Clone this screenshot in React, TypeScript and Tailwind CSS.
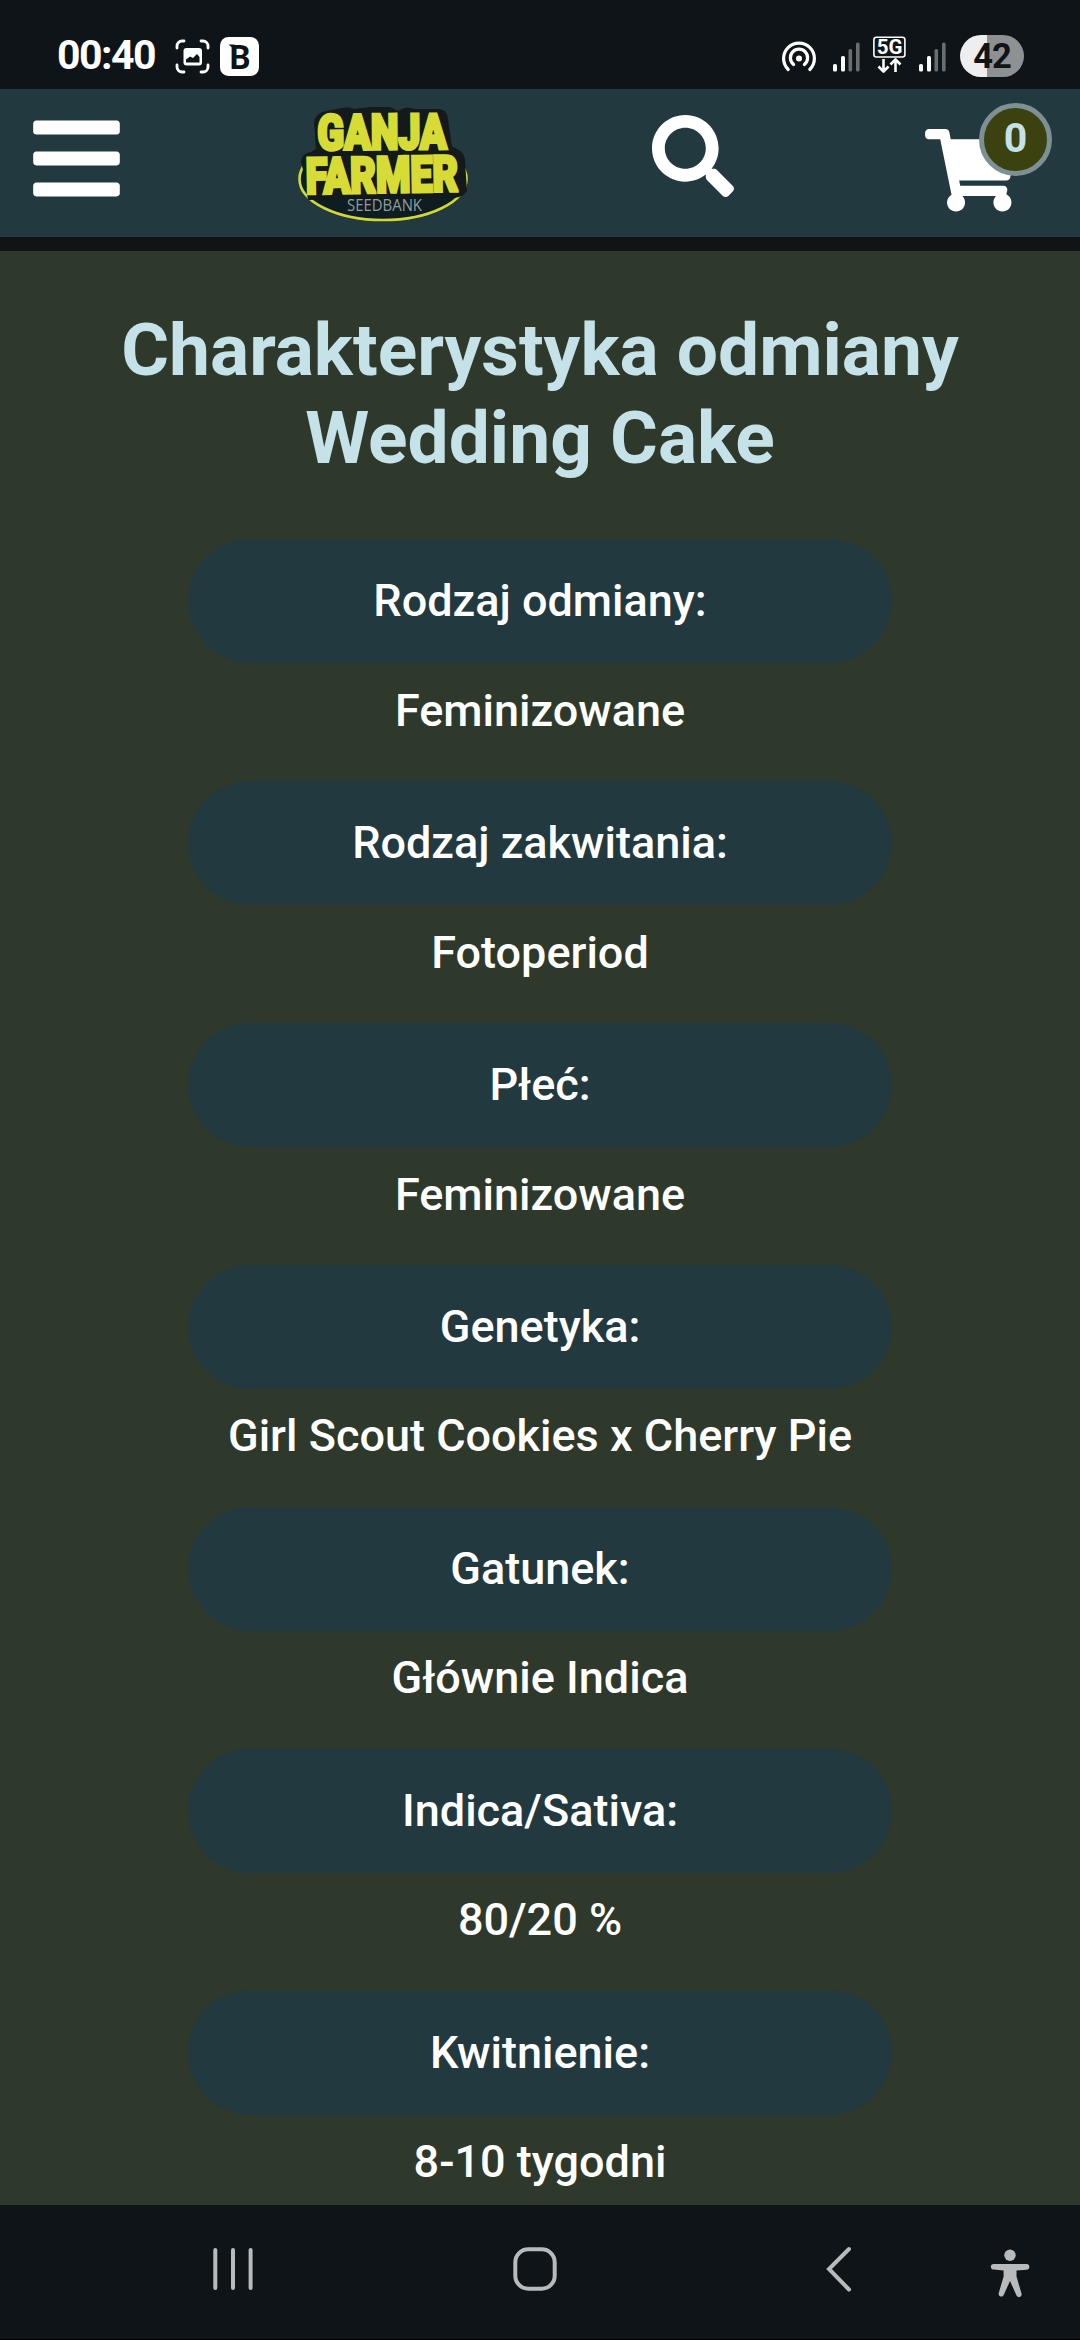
import { FaBars, FaSearch, FaShoppingCart } from 'react-icons/fa'

const traits = [
  { label: 'Rodzaj odmiany:', value: 'Feminizowane' },
  { label: 'Rodzaj zakwitania:', value: 'Fotoperiod' },
  { label: 'Płeć:', value: 'Feminizowane' },
  { label: 'Genetyka:', value: 'Girl Scout Cookies x Cherry Pie' },
  { label: 'Gatunek:', value: 'Głównie Indica' },
  { label: 'Indica/Sativa:', value: '80/20 %' },
  { label: 'Kwitnienie:', value: '8-10 tygodni' },
]

function SignalBars({ className = '' }: { className?: string }) {
  return (
    <svg viewBox="0 0 28 30" className={`h-[30px] w-[28px] shrink-0 ${className}`}>
      <rect x="0" y="22" width="4" height="7.5" rx="1.6" fill="#fff" />
      <rect x="8" y="14" width="4" height="15.5" rx="1.6" fill="#fff" />
      <rect x="15.5" y="7" width="3.6" height="22.5" rx="1.6" fill="#6b6e70" />
      <rect x="23" y="0.5" width="3.6" height="29" rx="1.6" fill="#6b6e70" />
    </svg>
  )
}

function StatusBar() {
  return (
    <div className="flex h-[89px] shrink-0 items-start bg-[#0e1417] text-white">
      <span className="mt-[31px] ml-[57px] w-[99px] text-[41px] leading-[48px] font-bold tracking-[-1.5px] whitespace-nowrap">
        00:40
      </span>

      {/* Screenshot */}
      <svg viewBox="0 0 36 36" className="mt-[38.5px] ml-[18.5px] h-9 w-9 shrink-0" fill="none">
        <path
          d="M2 9V7a5 5 0 0 1 5-5h2M26 2h2a5 5 0 0 1 5 5v2M33 26v2a5 5 0 0 1-5 5h-2M9 33H7a5 5 0 0 1-5-5v-2"
          stroke="#fff"
          strokeWidth="2.8"
          strokeLinecap="round"
        />
        <rect x="8.5" y="9" width="18.5" height="17.5" rx="3" fill="#fff" />
        <path d="M11 23.5v-3l4-3 3 1.5 4-4 2.5 3v5.5z" fill="#0e1417" />
      </svg>

      {/* Booking app */}
      <svg viewBox="0 0 39 39" className="mt-[37px] ml-[9.5px] h-[39px] w-[39px] shrink-0">
        <rect width="39" height="39" rx="8.5" fill="#fff" />
        <path d="M8.5 7.5h6v5z" fill="#0e1417" />
        <text x="9.5" y="31.5" fontSize="33" fontWeight="700" fill="#0e1417" className="font-[Roboto]">
          B
        </text>
      </svg>

      <div className="ml-auto flex items-start">
        {/* Hotspot */}
        <svg viewBox="0 0 36 32" className="mt-10 h-8 w-9 shrink-0" fill="none">
          <path d="M7.2 29.5A15.4 15.4 0 1 1 28.8 29.5" stroke="#fff" strokeWidth="3.2" strokeLinecap="round" />
          <path d="M12.6 24.5A8.6 8.6 0 1 1 23.4 24.5" stroke="#fff" strokeWidth="3.2" strokeLinecap="round" />
          <circle cx="18" cy="18.5" r="3" fill="#fff" />
        </svg>
        <SignalBars className="mt-10.5 ml-[16px]" />

        {/* 5G with traffic arrows */}
        <svg viewBox="0 0 33 38" className="mt-[35.5px] ml-[12px] h-[38px] w-[33px] shrink-0" fill="none">
          <rect x="0.9" y="1.2" width="31" height="19.8" rx="2.5" stroke="#fff" strokeWidth="1.6" />
          <text x="16.5" y="18.2" textAnchor="middle" fontSize="20.5" fontWeight="700" fill="#fff" className="font-[Roboto]">
            5G
          </text>
          <path d="M10.5 23v12M5.5 30.5l5 5 5-5M22.5 36V24M17.5 28.5l5-5 5 5" stroke="#fff" strokeWidth="2.6" strokeLinejoin="round" />
        </svg>
        <SignalBars className="mt-10.5 ml-[13px]" />

        <div className="mt-[35px] mr-14 ml-[13px] flex h-[42px] w-16 items-center justify-center rounded-full bg-linear-to-r from-[#eeeeee] from-[42%] to-[#8f9092] to-[42%] text-[34.5px] leading-none font-bold tracking-[-1px] text-[#0e1417]">
          42
        </div>
      </div>
    </div>
  )
}

function Logo() {
  return (
    <svg viewBox="0 0 200 150" className="h-[150px] w-[200px] shrink-0 overflow-visible">
      <ellipse cx="103" cy="90" rx="83.5" ry="41" fill="#0e1d22" stroke="#d2d835" strokeWidth="2.6" />
      {/* Dark backing behind the lettering */}
      <path
        d="M34 34Q35 24 46 22L63 19Q68 17 74 20L90 18H110L118 22Q126 16 134 20L158 20Q167 20 168 30L172 58Q185 62 185 72L187 102Q181 111 168 108L28 111Q23 80 21 72Q22 64 31 63L36 60Z"
        fill="#14191b"
      />
      <g fill="#d6dc35" stroke="#d6dc35" strokeWidth="3.2" fontWeight="900" className="font-[Roboto]">
        <text transform="translate(37.5 60.8) rotate(-0.5) scale(0.77 1)" fontSize="49" textLength="168" lengthAdjust="spacingAndGlyphs">
          GANJA
        </text>
        <text transform="translate(26 104.8) rotate(-1) scale(0.77 1)" fontSize="50" textLength="198" lengthAdjust="spacingAndGlyphs">
          FARMER
        </text>
      </g>
      <text x="67" y="121.7" fontSize="15.4" textLength="75" lengthAdjust="spacingAndGlyphs" fill="#929c9d" className="font-['Open_Sans']">
        SEEDBANK
      </text>
    </svg>
  )
}

function Header() {
  return (
    <header className="flex h-[162px] shrink-0 items-start border-b-[14px] border-[#121314] bg-[#22393f] text-white">
      <FaBars className="mt-[19.5px] ml-[33px] h-[99px] w-[87px]" />
      <div className="ml-[160px]">
        <Logo />
      </div>
      <FaSearch className="mt-[26px] ml-[172px] h-[82px] w-[82px]" />
      <div className="relative mt-10 ml-[191px]">
        <FaShoppingCart className="h-[82.5px] w-[93px]" />
        <span className="absolute -top-[26px] left-[54px] flex h-[73px] w-[73px] items-center justify-center rounded-full border-5 border-[#7d9194] bg-[#3b4210] pb-0.5 text-[41px] leading-none font-bold text-[#c5e2e8]">
          0
        </span>
      </div>
    </header>
  )
}

function NavigationBar() {
  return (
    <nav className="flex h-[135px] shrink-0 items-start border-b border-black bg-[#0e1417]">
      <svg viewBox="0 0 42 44" className="mt-[42px] ml-[212px] h-11 w-[42px]" stroke="#b9babc" strokeWidth="4" strokeLinecap="round">
        <path d="M3.3 3v38M21 3v38M38.6 3v38" />
      </svg>
      <svg viewBox="0 0 44 44" className="mt-[42px] ml-[259px] h-11 w-11" fill="none">
        <rect x="2.3" y="2.3" width="39.4" height="39.4" rx="13" stroke="#b9babc" strokeWidth="4" />
      </svg>
      <svg viewBox="0 0 28 48" className="mt-[40px] ml-[268px] h-12 w-7" fill="none">
        <path d="M24 4 4 24l20 20.500" stroke="#b9babc" strokeWidth="4" strokeLinecap="round" />
      </svg>
      <svg viewBox="0 0 40 50" className="mt-[43px] ml-[137px] h-[50px] w-10" fill="#b9babc">
        <circle cx="20" cy="7.3" r="5.7" />
        <path d="M3.7 16h32.8a2.8 2.8 0 0 1 0 5.7l-10 .8v6l5 17a2.7 2.7 0 0 1-5.2 1.6L20 33l-6.3 14a2.7 2.7 0 0 1-5.1-1.6l5-17v-6l-9.9-.8a2.8 2.8 0 0 1 0-5.6z" />
      </svg>
    </nav>
  )
}

export default function App() {
  return (
    <div className="flex h-[2340px] w-[1080px] flex-col overflow-hidden bg-[#2e392b] font-[Roboto,sans-serif]">
      <StatusBar />
      <Header />

      <main className="flex min-h-0 flex-1 flex-col items-center overflow-hidden pt-[55px] text-center">
        <h1 className="w-[900px] text-[73.1px] leading-[88px] font-bold text-[#c5e2e8]">
          Charakterystyka odmiany Wedding Cake
        </h1>
        <dl className="mt-[57px] w-[704px] text-[45px] leading-[67.5px] font-medium text-white">
          {traits.map(({ label, value }) => (
            <div key={label} className="h-[241.9px]">
              <dt className="flex h-[124.4px] items-center justify-center rounded-full bg-[#22393f]">{label}</dt>
              <dd className="mt-[13.4px]">{value}</dd>
            </div>
          ))}
        </dl>
      </main>

      <NavigationBar />
    </div>
  )
}
